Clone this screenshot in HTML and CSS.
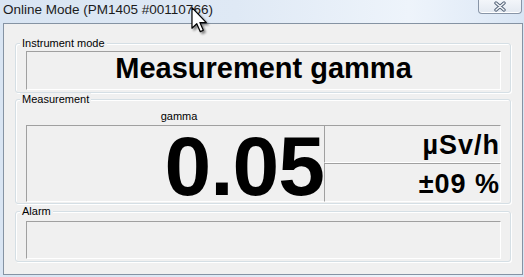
FILE: index.html
```html
<!DOCTYPE html>
<html>
<head>
    <meta charset="utf-8">
    <title>Online Mode</title>
    <link rel="stylesheet" href="styles.css">
</head>
<body>
<div class="window">
    <div class="titlebar">
        <span class="title">Online Mode (PM1405 #00110766)</span>
        <span class="close">
            <svg width="12" height="11" viewBox="0 0 12 11">
                <path d="M2 2 L10 9 M10 2 L2 9" stroke="#56657a" stroke-width="3.4" stroke-linecap="round"/>
                <path d="M2 2 L10 9 M10 2 L2 9" stroke="#f4f6f9" stroke-width="1.4" stroke-linecap="round"/>
            </svg>
        </span>
    </div>
    <div class="client">
        <div class="group group-mode">
            <span class="group-title">Instrument mode</span>
            <div class="sunken mode">Measurement gamma</div>
        </div>
        <div class="group group-meas">
            <span class="group-title">Measurement</span>
            <div class="channel">gamma</div>
            <div class="readout">
                <div class="sunken value">0.05</div>
                <div class="side">
                    <div class="sunken unit">µSv/h</div>
                    <div class="sunken unit error">±09 %</div>
                </div>
            </div>
        </div>
        <div class="group group-alarm">
            <span class="group-title">Alarm</span>
            <div class="sunken alarm"></div>
        </div>
    </div>
    <!-- mouse pointer over the title -->
    <svg class="cursor" width="17" height="26" viewBox="0 0 12 19">
        <path d="M0.5 0.5 L0.5 15.5 L4 12.2 L6.6 18 L8.8 17 L6.3 11.4 L11 11.4 Z" fill="#fff" stroke="#000" stroke-width="0.9" stroke-linejoin="round"/>
    </svg>
</div>
</body>
</html>
```

FILE: styles.css
```css
*{
    margin: 0;
    padding: 0;
    box-sizing: border-box;
}
body {
    width: 524px;
    height: 277px;
    overflow: hidden;
    font-family: "Liberation Sans", Arial, sans-serif;
    color: #000;
}
.window {
    position: relative;
    width: 524px;
    height: 277px;
    background: linear-gradient(to right, #d9e5f3 0%, #dfe9f5 45%, #eef4fb 78%, #e4edf8 90%, #d8e5f4 100%);
}
.titlebar {
    display: flex;
    align-items: flex-start;
    height: 23px;
}
.title {
    padding: 2px 0 0 3px;
    font-size: 13.5px;
    line-height: 16px;
    color: #1c1c1c;
}
.close {
    display: flex;
    justify-content: center;
    align-items: center;
    width: 44px;
    height: 14px;
    margin: 0 2px 0 auto;
    border: 1px solid #8895a7;
    border-top: none;
    border-radius: 0 0 4px 4px;
    background: linear-gradient(to bottom, #f3f6fa, #e3e9f1);
    box-shadow: inset 0 -1px 0 #fff;
}
.client {
    width: 520px;
    height: 252px;
    margin-left: 3px;
    padding-top: 19px;
    border: 1px solid #8593a3;
    background: #f0f0f0;
}
.group {
    margin: 0 11px;
    padding: 0 9px 2px 10px;
    border: 1px solid #d5dfe5;
    border-radius: 3px;
    box-shadow: inset 1px 1px 0 #fff, 1px 1px 0 #fff;
}
.group-meas {
    margin-top: 6px;
    padding-bottom: 1px;
}
.group-alarm {
    margin-top: 7px;
}
.group-title {
    display: block;
    width: fit-content;
    margin: -7px 0 0 -6px;
    padding: 0 2px;
    background: #f0f0f0;
    font-size: 11px;
    line-height: 13px;
}
.sunken {
    border: 1px solid;
    border-color: #a0a0a0 #fff #fff #a0a0a0;
}
.mode {
    height: 39px;
    margin-top: 1px;
    text-align: center;
    font-size: 29px;
    font-weight: bold;
    line-height: 32px;
}
.channel {
    width: 306px;
    margin-top: 4px;
    text-align: center;
    font-size: 11px;
    line-height: 13px;
}
.readout {
    display: grid;
    grid-template-columns: 298px 1fr;
    margin-top: 2px;
}
.value {
    height: 77px;
    border-right: none;
    text-align: right;
    font-size: 84px;
    font-weight: bold;
    line-height: 80px;
    letter-spacing: -1px;
}
.unit {
    height: 38px;
    padding-top: 3px;
    text-align: right;
    font-size: 27px;
    font-weight: bold;
    line-height: 32px;
    letter-spacing: 1px;
}
.unit.error {
    height: 39px;
    padding-top: 4px;
}
.alarm {
    height: 38px;
    margin-top: 3px;
}
.cursor {
    position: absolute;
    left: 191px;
    top: 7px;
    filter: drop-shadow(2px 2px 1px rgba(0, 0, 0, 0.45));
}
```
